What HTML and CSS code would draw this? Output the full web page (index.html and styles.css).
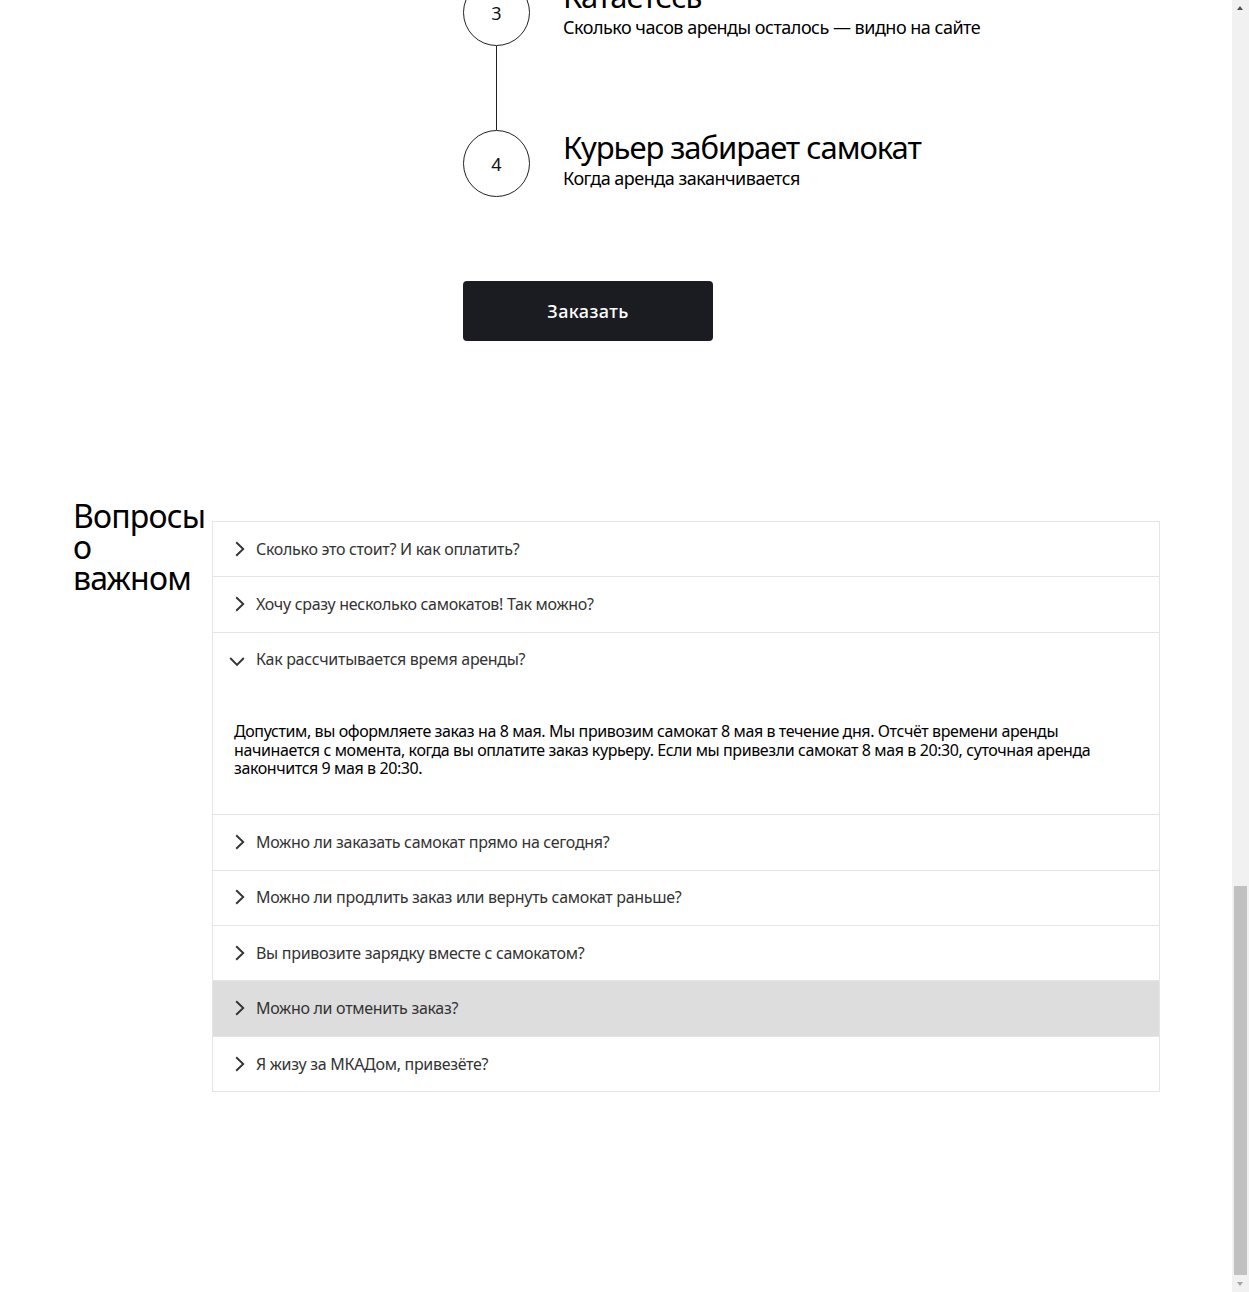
FILE: index.html
```html
<!DOCTYPE html>
<html lang="ru">
<head>
<meta charset="utf-8">
<title>Самокат на пару дней</title>
<link rel="stylesheet" href="styles.css">
</head>
<body>
<div class="page">
  <section class="steps">
    <ol class="steps-list">
      <li class="step">
        <div class="step-marker">
          <span class="step-num">3</span>
          <span class="step-line"></span>
        </div>
        <div class="step-body">
          <h3 class="step-title">Катаетесь</h3>
          <p class="step-text">Сколько часов аренды осталось — видно на сайте</p>
        </div>
      </li>
      <li class="step">
        <div class="step-marker">
          <span class="step-num">4</span>
        </div>
        <div class="step-body">
          <h3 class="step-title">Курьер забирает самокат</h3>
          <p class="step-text">Когда аренда заканчивается</p>
        </div>
      </li>
    </ol>
    <button class="order-btn" type="button">Заказать</button>
  </section>

  <section class="faq">
    <h2 class="faq-title">Вопросы о важном</h2>
    <div class="accordion">
      <div class="acc-item">
        <div class="acc-head"><span class="acc-icon"><svg width="10" height="16" viewBox="0 0 10 16"><path d="M1.2 1.2 L8.2 8 L1.2 14.8" fill="none" stroke="#333" stroke-width="1.9"/></svg></span><span class="acc-q">Сколько это стоит? И как оплатить?</span></div>
      </div>
      <div class="acc-item">
        <div class="acc-head"><span class="acc-icon"><svg width="10" height="16" viewBox="0 0 10 16"><path d="M1.2 1.2 L8.2 8 L1.2 14.8" fill="none" stroke="#333" stroke-width="1.9"/></svg></span><span class="acc-q">Хочу сразу несколько самокатов! Так можно?</span></div>
      </div>
      <div class="acc-item acc-open">
        <div class="acc-head"><span class="acc-icon acc-icon-open"><svg width="16" height="11" viewBox="0 0 16 11"><path d="M1.2 2 L8 9 L14.8 2" fill="none" stroke="#333" stroke-width="1.9"/></svg></span><span class="acc-q">Как рассчитывается время аренды?</span></div>
        <div class="acc-panel">
          <p class="acc-answer">Допустим, вы оформляете заказ на 8 мая. Мы привозим самокат 8 мая в течение дня. Отсчёт времени аренды начинается с момента, когда вы оплатите заказ курьеру. Если мы привезли самокат 8 мая в 20:30, суточная аренда закончится 9 мая в 20:30.</p>
        </div>
      </div>
      <div class="acc-item">
        <div class="acc-head"><span class="acc-icon"><svg width="10" height="16" viewBox="0 0 10 16"><path d="M1.2 1.2 L8.2 8 L1.2 14.8" fill="none" stroke="#333" stroke-width="1.9"/></svg></span><span class="acc-q">Можно ли заказать самокат прямо на сегодня?</span></div>
      </div>
      <div class="acc-item">
        <div class="acc-head"><span class="acc-icon"><svg width="10" height="16" viewBox="0 0 10 16"><path d="M1.2 1.2 L8.2 8 L1.2 14.8" fill="none" stroke="#333" stroke-width="1.9"/></svg></span><span class="acc-q">Можно ли продлить заказ или вернуть самокат раньше?</span></div>
      </div>
      <div class="acc-item">
        <div class="acc-head"><span class="acc-icon"><svg width="10" height="16" viewBox="0 0 10 16"><path d="M1.2 1.2 L8.2 8 L1.2 14.8" fill="none" stroke="#333" stroke-width="1.9"/></svg></span><span class="acc-q">Вы привозите зарядку вместе с самокатом?</span></div>
      </div>
      <div class="acc-item acc-hover">
        <div class="acc-head"><span class="acc-icon"><svg width="10" height="16" viewBox="0 0 10 16"><path d="M1.2 1.2 L8.2 8 L1.2 14.8" fill="none" stroke="#333" stroke-width="1.9"/></svg></span><span class="acc-q">Можно ли отменить заказ?</span></div>
      </div>
      <div class="acc-item">
        <div class="acc-head"><span class="acc-icon"><svg width="10" height="16" viewBox="0 0 10 16"><path d="M1.2 1.2 L8.2 8 L1.2 14.8" fill="none" stroke="#333" stroke-width="1.9"/></svg></span><span class="acc-q">Я жизу за МКАДом, привезёте?</span></div>
      </div>
    </div>
  </section>
</div>

<div class="scrollbar" aria-hidden="true">
  <span class="sb-up"></span>
  <span class="sb-thumb"></span>
  <span class="sb-down"></span>
</div>
</body>
</html>
```

FILE: styles.css
```css
html {
  overflow: hidden;
  height: 100%;
}

body {
  margin: 0;
  background: #fff;
  color: #000;
  font-family: "Noto Sans", "Open Sans", Arial, sans-serif;
}

.page {
  width: 1232px;
  box-sizing: border-box;
  padding: 0 72px 0 73px;
}

/* ---------- steps ---------- */
.steps {
  padding-left: 390px;
}

.steps-list {
  list-style: none;
  margin: -21px 0 0;
  padding: 0;
}

.step {
  display: grid;
  grid-template-columns: 67px 1fr;
  column-gap: 33px;
}

.step-marker {
  display: flex;
  flex-direction: column;
  align-items: center;
}

.step-num {
  box-sizing: border-box;
  width: 67px;
  height: 67px;
  border: 1px solid #222;
  border-radius: 50%;
  display: flex;
  align-items: center;
  justify-content: center;
  font-size: 18px;
  line-height: 1;
  color: #111;
}

.step-line {
  width: 1px;
  height: 84px;
  background: #222;
}

.step-title {
  margin: -2px 0 0;
  font-size: 31px;
  line-height: 38px;
  font-weight: 400;
  letter-spacing: -1.05px;
}

.step-text {
  margin: 0;
  font-size: 18px;
  line-height: 24px;
  letter-spacing: -0.5px;
}

.order-btn {
  display: block;
  margin-top: 84px;
  width: 250px;
  height: 60px;
  border: 0;
  border-radius: 4px;
  background: #1b1c22;
  color: #fff;
  font-family: inherit;
  font-size: 18px;
  font-weight: 500;
  letter-spacing: 0.4px;
  padding: 0;
}

/* ---------- faq ---------- */
.faq {
  margin-top: 159px;
  display: grid;
  grid-template-columns: 139px 1fr;
  align-items: start;
}

.faq-title {
  margin: 0;
  font-size: 32px;
  line-height: 31px;
  font-weight: 400;
  letter-spacing: -0.8px;
  width: min-content;
}

.accordion {
  margin-top: 21px;
  border: 1px solid #e5e5e5;
}

.acc-item {
  border-bottom: 1px solid #e5e5e5;
}

.acc-item:last-child {
  border-bottom: 0;
}

.acc-head {
  display: flex;
  align-items: center;
  padding: 16.7px 20px 17.7px 22px;
  font-size: 16px;
  line-height: 20px;
  letter-spacing: -0.3px;
  color: #333;
}

.acc-icon {
  flex: 0 0 21px;
  display: flex;
  align-items: center;
}

.acc-icon-open {
  flex-basis: 27px;
  margin-left: -6px;
  padding-top: 5px;
}

.acc-hover {
  background: #dddddd;
}

.acc-panel {
  padding: 35px 20px 37px 21px;
}

.acc-answer {
  margin: 0;
  font-size: 16px;
  line-height: 18.4px;
  letter-spacing: -0.4px;
  color: #000;
}

/* ---------- fake scrollbar ---------- */
.scrollbar {
  position: fixed;
  top: 0;
  right: 0;
  width: 17px;
  height: 100%;
  background: #f1f1f1;
}

.sb-up,
.sb-down {
  position: absolute;
  left: 5px;
  width: 0;
  height: 0;
  border-left: 3.5px solid transparent;
  border-right: 3.5px solid transparent;
}

.sb-up {
  top: 6px;
  border-bottom: 4px solid #505050;
}

.sb-down {
  bottom: 6px;
  border-top: 4px solid #a3a3a3;
}

.sb-thumb {
  position: absolute;
  left: 2px;
  right: 2px;
  top: 886px;
  height: 389px;
  background: #c1c1c1;
}
```
